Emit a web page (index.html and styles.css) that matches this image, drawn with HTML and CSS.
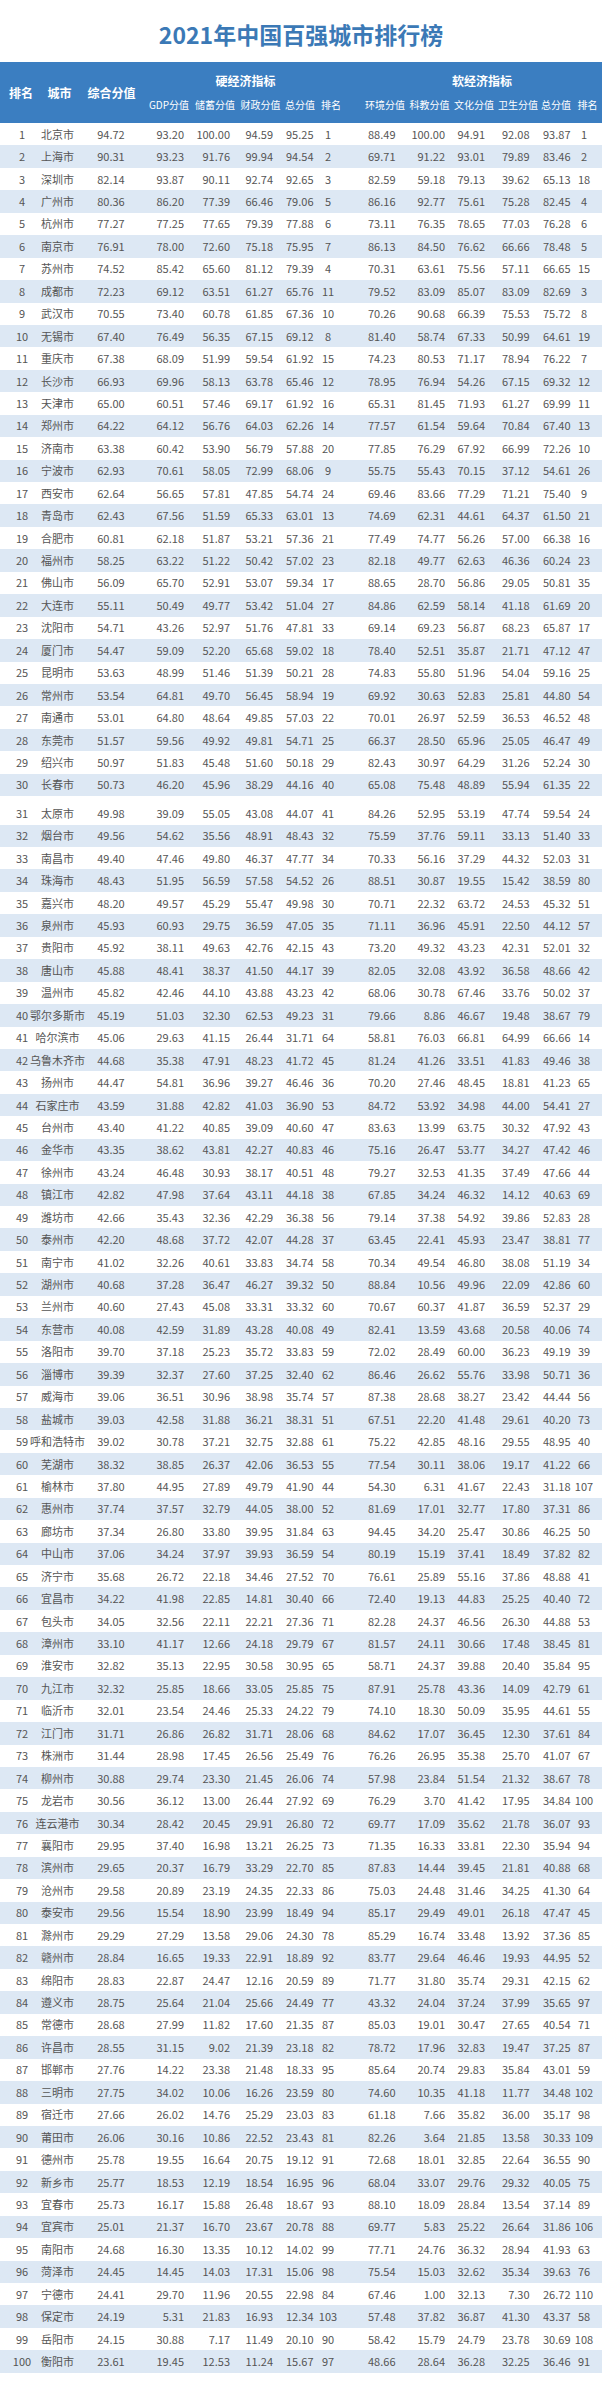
FILE: index.html
```html
<!DOCTYPE html>
<html lang="zh-CN">
<head>
<meta charset="utf-8">
<title>2021年中国百强城市排行榜</title>
<link rel="stylesheet" href="styles.css">
</head>
<body>
<div class="page">
  <h1 class="title">2021年中国百强城市排行榜</h1>
  <div class="thead">
    <div class="th-main w-rank">排名</div>
    <div class="th-main w-city">城市</div>
    <div class="th-main w-total">综合分值</div>
    <div class="th-group hard">
      <div class="th-title">硬经济指标</div>
      <div class="th-subs">
        <span class="s46">GDP分值</span><span class="s46">储蓄分值</span><span class="s45">财政分值</span><span class="s34">总分值</span><span class="s28">排名</span>
      </div>
    </div>
    <div class="th-gap"></div>
    <div class="th-group soft">
      <div class="th-title">软经济指标</div>
      <div class="th-subs">
        <span class="s46">环境分值</span><span class="s43">科教分值</span><span class="s46">文化分值</span><span class="s42">卫生分值</span><span class="s34">总分值</span><span class="s29">排名</span>
      </div>
    </div>
  </div>
  <div class="tbody">
<div class="r"><span>1</span><span>北京市</span><span>94.72</span><span>93.20</span><span>100.00</span><span>94.59</span><span>95.25</span><span>1</span><span>88.49</span><span>100.00</span><span>94.91</span><span>92.08</span><span>93.87</span><span>1</span></div>
<div class="r"><span>2</span><span>上海市</span><span>90.31</span><span>93.23</span><span>91.76</span><span>99.94</span><span>94.54</span><span>2</span><span>69.71</span><span>91.22</span><span>93.01</span><span>79.89</span><span>83.46</span><span>2</span></div>
<div class="r"><span>3</span><span>深圳市</span><span>82.14</span><span>93.87</span><span>90.11</span><span>92.74</span><span>92.65</span><span>3</span><span>82.59</span><span>59.18</span><span>79.13</span><span>39.62</span><span>65.13</span><span>18</span></div>
<div class="r"><span>4</span><span>广州市</span><span>80.36</span><span>86.20</span><span>77.39</span><span>66.46</span><span>79.06</span><span>5</span><span>86.16</span><span>92.77</span><span>75.61</span><span>75.28</span><span>82.45</span><span>4</span></div>
<div class="r"><span>5</span><span>杭州市</span><span>77.27</span><span>77.25</span><span>77.65</span><span>79.39</span><span>77.88</span><span>6</span><span>73.11</span><span>76.35</span><span>78.65</span><span>77.03</span><span>76.28</span><span>6</span></div>
<div class="r"><span>6</span><span>南京市</span><span>76.91</span><span>78.00</span><span>72.60</span><span>75.18</span><span>75.95</span><span>7</span><span>86.13</span><span>84.50</span><span>76.62</span><span>66.66</span><span>78.48</span><span>5</span></div>
<div class="r"><span>7</span><span>苏州市</span><span>74.52</span><span>85.42</span><span>65.60</span><span>81.12</span><span>79.39</span><span>4</span><span>70.31</span><span>63.61</span><span>75.56</span><span>57.11</span><span>66.65</span><span>15</span></div>
<div class="r"><span>8</span><span>成都市</span><span>72.23</span><span>69.12</span><span>63.51</span><span>61.27</span><span>65.76</span><span>11</span><span>79.52</span><span>83.09</span><span>85.07</span><span>83.09</span><span>82.69</span><span>3</span></div>
<div class="r"><span>9</span><span>武汉市</span><span>70.55</span><span>73.40</span><span>60.78</span><span>61.85</span><span>67.36</span><span>10</span><span>70.26</span><span>90.68</span><span>66.39</span><span>75.53</span><span>75.72</span><span>8</span></div>
<div class="r"><span>10</span><span>无锡市</span><span>67.40</span><span>76.49</span><span>56.35</span><span>67.15</span><span>69.12</span><span>8</span><span>81.40</span><span>58.74</span><span>67.33</span><span>50.99</span><span>64.61</span><span>19</span></div>
<div class="r"><span>11</span><span>重庆市</span><span>67.38</span><span>68.09</span><span>51.99</span><span>59.54</span><span>61.92</span><span>15</span><span>74.23</span><span>80.53</span><span>71.17</span><span>78.94</span><span>76.22</span><span>7</span></div>
<div class="r"><span>12</span><span>长沙市</span><span>66.93</span><span>69.96</span><span>58.13</span><span>63.78</span><span>65.46</span><span>12</span><span>78.95</span><span>76.94</span><span>54.26</span><span>67.15</span><span>69.32</span><span>12</span></div>
<div class="r"><span>13</span><span>天津市</span><span>65.00</span><span>60.51</span><span>57.46</span><span>69.17</span><span>61.92</span><span>16</span><span>65.31</span><span>81.45</span><span>71.93</span><span>61.27</span><span>69.99</span><span>11</span></div>
<div class="r"><span>14</span><span>郑州市</span><span>64.22</span><span>64.12</span><span>56.76</span><span>64.03</span><span>62.26</span><span>14</span><span>77.57</span><span>61.54</span><span>59.64</span><span>70.84</span><span>67.40</span><span>13</span></div>
<div class="r"><span>15</span><span>济南市</span><span>63.38</span><span>60.42</span><span>53.90</span><span>56.79</span><span>57.88</span><span>20</span><span>77.85</span><span>76.29</span><span>67.92</span><span>66.99</span><span>72.26</span><span>10</span></div>
<div class="r"><span>16</span><span>宁波市</span><span>62.93</span><span>70.61</span><span>58.05</span><span>72.99</span><span>68.06</span><span>9</span><span>55.75</span><span>55.43</span><span>70.15</span><span>37.12</span><span>54.61</span><span>26</span></div>
<div class="r"><span>17</span><span>西安市</span><span>62.64</span><span>56.65</span><span>57.81</span><span>47.85</span><span>54.74</span><span>24</span><span>69.46</span><span>83.66</span><span>77.29</span><span>71.21</span><span>75.40</span><span>9</span></div>
<div class="r"><span>18</span><span>青岛市</span><span>62.43</span><span>67.56</span><span>51.59</span><span>65.33</span><span>63.01</span><span>13</span><span>74.69</span><span>62.31</span><span>44.61</span><span>64.37</span><span>61.50</span><span>21</span></div>
<div class="r"><span>19</span><span>合肥市</span><span>60.81</span><span>62.18</span><span>51.87</span><span>53.21</span><span>57.36</span><span>21</span><span>77.49</span><span>74.77</span><span>56.26</span><span>57.00</span><span>66.38</span><span>16</span></div>
<div class="r"><span>20</span><span>福州市</span><span>58.25</span><span>63.22</span><span>51.22</span><span>50.42</span><span>57.02</span><span>23</span><span>82.18</span><span>49.77</span><span>62.63</span><span>46.36</span><span>60.24</span><span>23</span></div>
<div class="r"><span>21</span><span>佛山市</span><span>56.09</span><span>65.70</span><span>52.91</span><span>53.07</span><span>59.34</span><span>17</span><span>88.65</span><span>28.70</span><span>56.86</span><span>29.05</span><span>50.81</span><span>35</span></div>
<div class="r"><span>22</span><span>大连市</span><span>55.11</span><span>50.49</span><span>49.77</span><span>53.42</span><span>51.04</span><span>27</span><span>84.86</span><span>62.59</span><span>58.14</span><span>41.18</span><span>61.69</span><span>20</span></div>
<div class="r"><span>23</span><span>沈阳市</span><span>54.71</span><span>43.26</span><span>52.97</span><span>51.76</span><span>47.81</span><span>33</span><span>69.14</span><span>69.23</span><span>56.87</span><span>68.23</span><span>65.87</span><span>17</span></div>
<div class="r"><span>24</span><span>厦门市</span><span>54.47</span><span>59.09</span><span>52.20</span><span>65.68</span><span>59.02</span><span>18</span><span>78.40</span><span>52.51</span><span>35.87</span><span>21.71</span><span>47.12</span><span>47</span></div>
<div class="r"><span>25</span><span>昆明市</span><span>53.63</span><span>48.99</span><span>51.46</span><span>51.39</span><span>50.21</span><span>28</span><span>74.83</span><span>55.80</span><span>51.96</span><span>54.04</span><span>59.16</span><span>25</span></div>
<div class="r"><span>26</span><span>常州市</span><span>53.54</span><span>64.81</span><span>49.70</span><span>56.45</span><span>58.94</span><span>19</span><span>69.92</span><span>30.63</span><span>52.83</span><span>25.81</span><span>44.80</span><span>54</span></div>
<div class="r"><span>27</span><span>南通市</span><span>53.01</span><span>64.80</span><span>48.64</span><span>49.85</span><span>57.03</span><span>22</span><span>70.01</span><span>26.97</span><span>52.59</span><span>36.53</span><span>46.52</span><span>48</span></div>
<div class="r"><span>28</span><span>东莞市</span><span>51.57</span><span>59.56</span><span>49.92</span><span>49.81</span><span>54.71</span><span>25</span><span>66.37</span><span>28.50</span><span>65.96</span><span>25.05</span><span>46.47</span><span>49</span></div>
<div class="r"><span>29</span><span>绍兴市</span><span>50.97</span><span>51.83</span><span>45.48</span><span>51.60</span><span>50.18</span><span>29</span><span>82.43</span><span>30.97</span><span>64.29</span><span>31.26</span><span>52.24</span><span>30</span></div>
<div class="r"><span>30</span><span>长春市</span><span>50.73</span><span>46.20</span><span>45.96</span><span>38.29</span><span>44.16</span><span>40</span><span>65.08</span><span>75.48</span><span>48.89</span><span>55.94</span><span>61.35</span><span>22</span></div>
<div class="r gap"><span>31</span><span>太原市</span><span>49.98</span><span>39.09</span><span>55.05</span><span>43.08</span><span>44.07</span><span>41</span><span>84.26</span><span>52.95</span><span>53.19</span><span>47.74</span><span>59.54</span><span>24</span></div>
<div class="r"><span>32</span><span>烟台市</span><span>49.56</span><span>54.62</span><span>35.56</span><span>48.91</span><span>48.43</span><span>32</span><span>75.59</span><span>37.76</span><span>59.11</span><span>33.13</span><span>51.40</span><span>33</span></div>
<div class="r"><span>33</span><span>南昌市</span><span>49.40</span><span>47.46</span><span>49.80</span><span>46.37</span><span>47.77</span><span>34</span><span>70.33</span><span>56.16</span><span>37.29</span><span>44.32</span><span>52.03</span><span>31</span></div>
<div class="r"><span>34</span><span>珠海市</span><span>48.43</span><span>51.95</span><span>56.59</span><span>57.58</span><span>54.52</span><span>26</span><span>88.51</span><span>30.87</span><span>19.55</span><span>15.42</span><span>38.59</span><span>80</span></div>
<div class="r"><span>35</span><span>嘉兴市</span><span>48.20</span><span>49.57</span><span>45.29</span><span>55.47</span><span>49.98</span><span>30</span><span>70.71</span><span>22.32</span><span>63.72</span><span>24.53</span><span>45.32</span><span>51</span></div>
<div class="r"><span>36</span><span>泉州市</span><span>45.93</span><span>60.93</span><span>29.75</span><span>36.59</span><span>47.05</span><span>35</span><span>71.11</span><span>36.96</span><span>45.91</span><span>22.50</span><span>44.12</span><span>57</span></div>
<div class="r"><span>37</span><span>贵阳市</span><span>45.92</span><span>38.11</span><span>49.63</span><span>42.76</span><span>42.15</span><span>43</span><span>73.20</span><span>49.32</span><span>43.23</span><span>42.31</span><span>52.01</span><span>32</span></div>
<div class="r"><span>38</span><span>唐山市</span><span>45.88</span><span>48.41</span><span>38.37</span><span>41.50</span><span>44.17</span><span>39</span><span>82.05</span><span>32.08</span><span>43.92</span><span>36.58</span><span>48.66</span><span>42</span></div>
<div class="r"><span>39</span><span>温州市</span><span>45.82</span><span>42.46</span><span>44.10</span><span>43.88</span><span>43.23</span><span>42</span><span>68.06</span><span>30.78</span><span>67.46</span><span>33.76</span><span>50.02</span><span>37</span></div>
<div class="r"><span>40</span><span>鄂尔多斯市</span><span>45.19</span><span>51.03</span><span>32.30</span><span>62.53</span><span>49.23</span><span>31</span><span>79.66</span><span>8.86</span><span>46.67</span><span>19.48</span><span>38.67</span><span>79</span></div>
<div class="r"><span>41</span><span>哈尔滨市</span><span>45.06</span><span>29.63</span><span>41.15</span><span>26.44</span><span>31.71</span><span>64</span><span>58.81</span><span>76.03</span><span>66.81</span><span>64.99</span><span>66.66</span><span>14</span></div>
<div class="r"><span>42</span><span>乌鲁木齐市</span><span>44.68</span><span>35.38</span><span>47.91</span><span>48.23</span><span>41.72</span><span>45</span><span>81.24</span><span>41.26</span><span>33.51</span><span>41.83</span><span>49.46</span><span>38</span></div>
<div class="r"><span>43</span><span>扬州市</span><span>44.47</span><span>54.81</span><span>36.96</span><span>39.27</span><span>46.46</span><span>36</span><span>70.20</span><span>27.46</span><span>48.45</span><span>18.81</span><span>41.23</span><span>65</span></div>
<div class="r"><span>44</span><span>石家庄市</span><span>43.59</span><span>31.88</span><span>42.82</span><span>41.03</span><span>36.90</span><span>53</span><span>84.72</span><span>53.92</span><span>34.98</span><span>44.00</span><span>54.41</span><span>27</span></div>
<div class="r"><span>45</span><span>台州市</span><span>43.40</span><span>41.22</span><span>40.85</span><span>39.09</span><span>40.60</span><span>47</span><span>83.63</span><span>13.99</span><span>63.75</span><span>30.32</span><span>47.92</span><span>43</span></div>
<div class="r"><span>46</span><span>金华市</span><span>43.35</span><span>38.62</span><span>43.81</span><span>42.27</span><span>40.83</span><span>46</span><span>75.16</span><span>26.47</span><span>53.77</span><span>34.27</span><span>47.42</span><span>46</span></div>
<div class="r"><span>47</span><span>徐州市</span><span>43.24</span><span>46.48</span><span>30.93</span><span>38.17</span><span>40.51</span><span>48</span><span>79.27</span><span>32.53</span><span>41.35</span><span>37.49</span><span>47.66</span><span>44</span></div>
<div class="r"><span>48</span><span>镇江市</span><span>42.82</span><span>47.98</span><span>37.64</span><span>43.11</span><span>44.18</span><span>38</span><span>67.85</span><span>34.24</span><span>46.32</span><span>14.12</span><span>40.63</span><span>69</span></div>
<div class="r"><span>49</span><span>潍坊市</span><span>42.66</span><span>35.43</span><span>32.36</span><span>42.29</span><span>36.38</span><span>56</span><span>79.14</span><span>37.38</span><span>54.92</span><span>39.86</span><span>52.83</span><span>28</span></div>
<div class="r"><span>50</span><span>泰州市</span><span>42.20</span><span>48.68</span><span>37.72</span><span>42.07</span><span>44.28</span><span>37</span><span>63.45</span><span>22.41</span><span>45.93</span><span>23.47</span><span>38.81</span><span>77</span></div>
<div class="r"><span>51</span><span>南宁市</span><span>41.02</span><span>32.26</span><span>40.61</span><span>33.83</span><span>34.74</span><span>58</span><span>70.34</span><span>49.54</span><span>46.80</span><span>38.08</span><span>51.19</span><span>34</span></div>
<div class="r"><span>52</span><span>湖州市</span><span>40.68</span><span>37.28</span><span>36.47</span><span>46.27</span><span>39.32</span><span>50</span><span>88.84</span><span>10.56</span><span>49.96</span><span>22.09</span><span>42.86</span><span>60</span></div>
<div class="r"><span>53</span><span>兰州市</span><span>40.60</span><span>27.43</span><span>45.08</span><span>33.31</span><span>33.32</span><span>60</span><span>70.67</span><span>60.37</span><span>41.87</span><span>36.59</span><span>52.37</span><span>29</span></div>
<div class="r"><span>54</span><span>东营市</span><span>40.08</span><span>42.59</span><span>31.89</span><span>43.28</span><span>40.08</span><span>49</span><span>82.41</span><span>13.59</span><span>43.68</span><span>20.58</span><span>40.06</span><span>74</span></div>
<div class="r"><span>55</span><span>洛阳市</span><span>39.70</span><span>37.18</span><span>25.23</span><span>35.72</span><span>33.83</span><span>59</span><span>72.02</span><span>28.49</span><span>60.00</span><span>36.23</span><span>49.19</span><span>39</span></div>
<div class="r"><span>56</span><span>淄博市</span><span>39.39</span><span>32.37</span><span>27.60</span><span>37.25</span><span>32.40</span><span>62</span><span>86.46</span><span>26.62</span><span>55.76</span><span>33.98</span><span>50.71</span><span>36</span></div>
<div class="r"><span>57</span><span>威海市</span><span>39.06</span><span>36.51</span><span>30.96</span><span>38.98</span><span>35.74</span><span>57</span><span>87.38</span><span>28.68</span><span>38.27</span><span>23.42</span><span>44.44</span><span>56</span></div>
<div class="r"><span>58</span><span>盐城市</span><span>39.03</span><span>42.58</span><span>31.88</span><span>36.21</span><span>38.31</span><span>51</span><span>67.51</span><span>22.20</span><span>41.48</span><span>29.61</span><span>40.20</span><span>73</span></div>
<div class="r"><span>59</span><span>呼和浩特市</span><span>39.02</span><span>30.78</span><span>37.21</span><span>32.75</span><span>32.88</span><span>61</span><span>75.22</span><span>42.85</span><span>48.16</span><span>29.55</span><span>48.95</span><span>40</span></div>
<div class="r"><span>60</span><span>芜湖市</span><span>38.32</span><span>38.85</span><span>26.37</span><span>42.06</span><span>36.53</span><span>55</span><span>77.54</span><span>30.11</span><span>38.06</span><span>19.17</span><span>41.22</span><span>66</span></div>
<div class="r"><span>61</span><span>榆林市</span><span>37.80</span><span>44.95</span><span>27.89</span><span>49.79</span><span>41.90</span><span>44</span><span>54.30</span><span>6.31</span><span>41.67</span><span>22.43</span><span>31.18</span><span>107</span></div>
<div class="r"><span>62</span><span>惠州市</span><span>37.74</span><span>37.57</span><span>32.79</span><span>44.05</span><span>38.00</span><span>52</span><span>81.69</span><span>17.01</span><span>32.77</span><span>17.80</span><span>37.31</span><span>86</span></div>
<div class="r"><span>63</span><span>廊坊市</span><span>37.34</span><span>26.80</span><span>33.80</span><span>39.95</span><span>31.84</span><span>63</span><span>94.45</span><span>34.20</span><span>25.47</span><span>30.86</span><span>46.25</span><span>50</span></div>
<div class="r"><span>64</span><span>中山市</span><span>37.06</span><span>34.24</span><span>37.97</span><span>39.93</span><span>36.59</span><span>54</span><span>80.19</span><span>15.19</span><span>37.41</span><span>18.49</span><span>37.82</span><span>82</span></div>
<div class="r"><span>65</span><span>济宁市</span><span>35.68</span><span>26.72</span><span>22.18</span><span>34.46</span><span>27.52</span><span>70</span><span>76.61</span><span>25.89</span><span>55.16</span><span>37.86</span><span>48.88</span><span>41</span></div>
<div class="r"><span>66</span><span>宜昌市</span><span>34.22</span><span>41.98</span><span>22.85</span><span>14.81</span><span>30.40</span><span>66</span><span>72.40</span><span>19.13</span><span>44.83</span><span>25.25</span><span>40.40</span><span>72</span></div>
<div class="r"><span>67</span><span>包头市</span><span>34.05</span><span>32.56</span><span>22.11</span><span>22.21</span><span>27.36</span><span>71</span><span>82.28</span><span>24.37</span><span>46.56</span><span>26.30</span><span>44.88</span><span>53</span></div>
<div class="r"><span>68</span><span>漳州市</span><span>33.10</span><span>41.17</span><span>12.66</span><span>24.18</span><span>29.79</span><span>67</span><span>81.57</span><span>24.11</span><span>30.66</span><span>17.48</span><span>38.45</span><span>81</span></div>
<div class="r"><span>69</span><span>淮安市</span><span>32.82</span><span>35.13</span><span>22.95</span><span>30.58</span><span>30.95</span><span>65</span><span>58.71</span><span>24.37</span><span>39.88</span><span>20.40</span><span>35.84</span><span>95</span></div>
<div class="r"><span>70</span><span>九江市</span><span>32.32</span><span>25.85</span><span>18.66</span><span>33.05</span><span>25.85</span><span>75</span><span>87.91</span><span>25.78</span><span>43.36</span><span>14.09</span><span>42.79</span><span>61</span></div>
<div class="r"><span>71</span><span>临沂市</span><span>32.01</span><span>23.54</span><span>24.46</span><span>25.33</span><span>24.22</span><span>79</span><span>74.10</span><span>18.30</span><span>50.09</span><span>35.95</span><span>44.61</span><span>55</span></div>
<div class="r"><span>72</span><span>江门市</span><span>31.71</span><span>26.86</span><span>26.82</span><span>31.71</span><span>28.06</span><span>68</span><span>84.62</span><span>17.07</span><span>36.45</span><span>12.30</span><span>37.61</span><span>84</span></div>
<div class="r"><span>73</span><span>株洲市</span><span>31.44</span><span>28.98</span><span>17.45</span><span>26.56</span><span>25.49</span><span>76</span><span>76.26</span><span>26.95</span><span>35.38</span><span>25.70</span><span>41.07</span><span>67</span></div>
<div class="r"><span>74</span><span>柳州市</span><span>30.88</span><span>29.74</span><span>23.30</span><span>21.45</span><span>26.06</span><span>74</span><span>57.98</span><span>23.84</span><span>51.54</span><span>21.32</span><span>38.67</span><span>78</span></div>
<div class="r"><span>75</span><span>龙岩市</span><span>30.56</span><span>36.12</span><span>13.00</span><span>26.44</span><span>27.92</span><span>69</span><span>76.29</span><span>3.70</span><span>41.42</span><span>17.95</span><span>34.84</span><span>100</span></div>
<div class="r"><span>76</span><span>连云港市</span><span>30.34</span><span>28.42</span><span>20.45</span><span>29.91</span><span>26.80</span><span>72</span><span>69.77</span><span>17.09</span><span>35.62</span><span>21.78</span><span>36.07</span><span>93</span></div>
<div class="r"><span>77</span><span>襄阳市</span><span>29.95</span><span>37.40</span><span>16.98</span><span>13.21</span><span>26.25</span><span>73</span><span>71.35</span><span>16.33</span><span>33.81</span><span>22.30</span><span>35.94</span><span>94</span></div>
<div class="r"><span>78</span><span>滨州市</span><span>29.65</span><span>20.37</span><span>16.79</span><span>33.29</span><span>22.70</span><span>85</span><span>87.83</span><span>14.44</span><span>39.45</span><span>21.81</span><span>40.88</span><span>68</span></div>
<div class="r"><span>79</span><span>沧州市</span><span>29.58</span><span>20.89</span><span>23.19</span><span>24.35</span><span>22.33</span><span>86</span><span>75.03</span><span>24.48</span><span>31.46</span><span>34.25</span><span>41.30</span><span>64</span></div>
<div class="r"><span>80</span><span>泰安市</span><span>29.56</span><span>15.54</span><span>18.90</span><span>23.99</span><span>18.49</span><span>94</span><span>85.17</span><span>29.49</span><span>49.01</span><span>26.18</span><span>47.47</span><span>45</span></div>
<div class="r"><span>81</span><span>滁州市</span><span>29.29</span><span>27.29</span><span>13.58</span><span>29.06</span><span>24.30</span><span>78</span><span>85.29</span><span>16.74</span><span>33.48</span><span>13.92</span><span>37.36</span><span>85</span></div>
<div class="r"><span>82</span><span>赣州市</span><span>28.84</span><span>16.65</span><span>19.33</span><span>22.91</span><span>18.89</span><span>92</span><span>83.77</span><span>29.64</span><span>46.46</span><span>19.93</span><span>44.95</span><span>52</span></div>
<div class="r"><span>83</span><span>绵阳市</span><span>28.83</span><span>22.87</span><span>24.47</span><span>12.16</span><span>20.59</span><span>89</span><span>71.77</span><span>31.80</span><span>35.74</span><span>29.31</span><span>42.15</span><span>62</span></div>
<div class="r"><span>84</span><span>遵义市</span><span>28.75</span><span>25.64</span><span>21.04</span><span>25.66</span><span>24.49</span><span>77</span><span>43.32</span><span>24.04</span><span>37.24</span><span>37.99</span><span>35.65</span><span>97</span></div>
<div class="r"><span>85</span><span>常德市</span><span>28.68</span><span>27.99</span><span>11.82</span><span>17.60</span><span>21.35</span><span>87</span><span>85.03</span><span>19.01</span><span>30.47</span><span>27.65</span><span>40.54</span><span>71</span></div>
<div class="r"><span>86</span><span>许昌市</span><span>28.55</span><span>31.15</span><span>9.02</span><span>21.39</span><span>23.18</span><span>82</span><span>78.72</span><span>17.96</span><span>32.83</span><span>19.47</span><span>37.25</span><span>87</span></div>
<div class="r"><span>87</span><span>邯郸市</span><span>27.76</span><span>14.22</span><span>23.38</span><span>21.48</span><span>18.33</span><span>95</span><span>85.64</span><span>20.74</span><span>29.83</span><span>35.84</span><span>43.01</span><span>59</span></div>
<div class="r"><span>88</span><span>三明市</span><span>27.75</span><span>34.02</span><span>10.06</span><span>16.26</span><span>23.59</span><span>80</span><span>74.60</span><span>10.35</span><span>41.18</span><span>11.77</span><span>34.48</span><span>102</span></div>
<div class="r"><span>89</span><span>宿迁市</span><span>27.66</span><span>26.02</span><span>14.76</span><span>25.29</span><span>23.03</span><span>83</span><span>61.18</span><span>7.66</span><span>35.82</span><span>36.00</span><span>35.17</span><span>98</span></div>
<div class="r"><span>90</span><span>莆田市</span><span>26.06</span><span>30.16</span><span>10.86</span><span>22.52</span><span>23.43</span><span>81</span><span>82.26</span><span>3.64</span><span>21.85</span><span>13.58</span><span>30.33</span><span>109</span></div>
<div class="r"><span>91</span><span>德州市</span><span>25.78</span><span>19.55</span><span>16.64</span><span>20.75</span><span>19.12</span><span>91</span><span>72.68</span><span>18.01</span><span>32.85</span><span>22.64</span><span>36.55</span><span>90</span></div>
<div class="r"><span>92</span><span>新乡市</span><span>25.77</span><span>18.53</span><span>12.19</span><span>18.54</span><span>16.95</span><span>96</span><span>68.04</span><span>33.07</span><span>29.76</span><span>29.32</span><span>40.05</span><span>75</span></div>
<div class="r"><span>93</span><span>宜春市</span><span>25.73</span><span>16.17</span><span>15.88</span><span>26.48</span><span>18.67</span><span>93</span><span>88.10</span><span>18.09</span><span>28.84</span><span>13.54</span><span>37.14</span><span>89</span></div>
<div class="r"><span>94</span><span>宜宾市</span><span>25.01</span><span>21.37</span><span>16.70</span><span>23.67</span><span>20.78</span><span>88</span><span>69.77</span><span>5.83</span><span>25.22</span><span>26.64</span><span>31.86</span><span>106</span></div>
<div class="r"><span>95</span><span>南阳市</span><span>24.68</span><span>16.30</span><span>13.35</span><span>10.12</span><span>14.02</span><span>99</span><span>77.71</span><span>24.76</span><span>36.32</span><span>28.94</span><span>41.93</span><span>63</span></div>
<div class="r"><span>96</span><span>菏泽市</span><span>24.45</span><span>14.45</span><span>14.03</span><span>17.31</span><span>15.06</span><span>98</span><span>75.54</span><span>15.03</span><span>32.62</span><span>35.34</span><span>39.63</span><span>76</span></div>
<div class="r"><span>97</span><span>宁德市</span><span>24.41</span><span>29.70</span><span>11.96</span><span>20.55</span><span>22.98</span><span>84</span><span>67.46</span><span>1.00</span><span>32.13</span><span>7.30</span><span>26.72</span><span>110</span></div>
<div class="r"><span>98</span><span>保定市</span><span>24.19</span><span>5.31</span><span>21.83</span><span>16.93</span><span>12.34</span><span>103</span><span>57.48</span><span>37.82</span><span>36.87</span><span>41.30</span><span>43.37</span><span>58</span></div>
<div class="r"><span>99</span><span>岳阳市</span><span>24.15</span><span>30.88</span><span>7.17</span><span>11.49</span><span>20.10</span><span>90</span><span>58.42</span><span>15.79</span><span>24.79</span><span>23.78</span><span>30.69</span><span>108</span></div>
<div class="r"><span>100</span><span>衡阳市</span><span>23.61</span><span>19.45</span><span>12.53</span><span>11.24</span><span>15.67</span><span>97</span><span>48.66</span><span>28.64</span><span>36.28</span><span>32.25</span><span>36.46</span><span>91</span></div>
  </div>
</div>
</body>
</html>
```

FILE: styles.css
```css
html, body {
  margin: 0;
  padding: 0;
  background: #ffffff;
}

body {
  font-family: "Noto Sans CJK SC", "Noto Sans", "Liberation Sans", sans-serif;
}

.page {
  width: 602px;
}

.title {
  margin: 0;
  height: 62px;
  box-sizing: border-box;
  padding-top: 20px;
  text-align: center;
  font-size: 23px;
  line-height: 28px;
  font-weight: 700;
  color: #3b79b6;
}

/* ---------- header ---------- */
.thead {
  display: flex;
  height: 61px;
  background: #3b7ec1;
  color: #ffffff;
}

.th-main {
  flex: none;
  display: flex;
  align-items: center;
  justify-content: center;
  font-size: 12px;
  font-weight: 700;
  white-space: nowrap;
}

.w-rank { width: 42px; }
.w-city { width: 35px; }
.w-total { width: 69px; }

.th-group {
  flex: none;
  display: flex;
  flex-direction: column;
  padding-top: 8px;
}

.th-group.hard { width: 199px; }
.th-group.soft { width: 240px; }
.th-gap { flex: none; width: 17px; }

.th-title {
  height: 22px;
  line-height: 22px;
  text-align: center;
  font-size: 12px;
  font-weight: 700;
}

.th-subs {
  display: flex;
  height: 24px;
  align-items: center;
  font-size: 10px;
}

.th-subs span {
  flex: none;
  display: flex;
  justify-content: center;
  white-space: nowrap;
}

.s46 { width: 46px; }
.s45 { width: 45px; }
.s43 { width: 43px; }
.s42 { width: 42px; }
.s34 { width: 34px; }
.s29 { width: 29px; }
.s28 { width: 28px; }

/* ---------- body rows ---------- */
.r {
  display: grid;
  grid-template-columns: 44px 27px 80px 33px 46px 43px 40.5px 29px 53px 49.5px 40px 44.5px 41px 27px;
  padding-right: 4.5px;
  height: 22.45px;
  align-items: center;
  font-size: 11px;
  color: #555555;
}

.tbody .r:nth-child(even) {
  background: #dde8f4;
}

.r.gap {
  margin-top: 6px;
}

.r span {
  display: flex;
  justify-content: flex-end;
  white-space: nowrap;
  line-height: 1;
  min-width: 0;
}

.r span:nth-child(1),
.r span:nth-child(2),
.r span:nth-child(3),
.r span:nth-child(8),
.r span:nth-child(14) {
  justify-content: center;
}
```
